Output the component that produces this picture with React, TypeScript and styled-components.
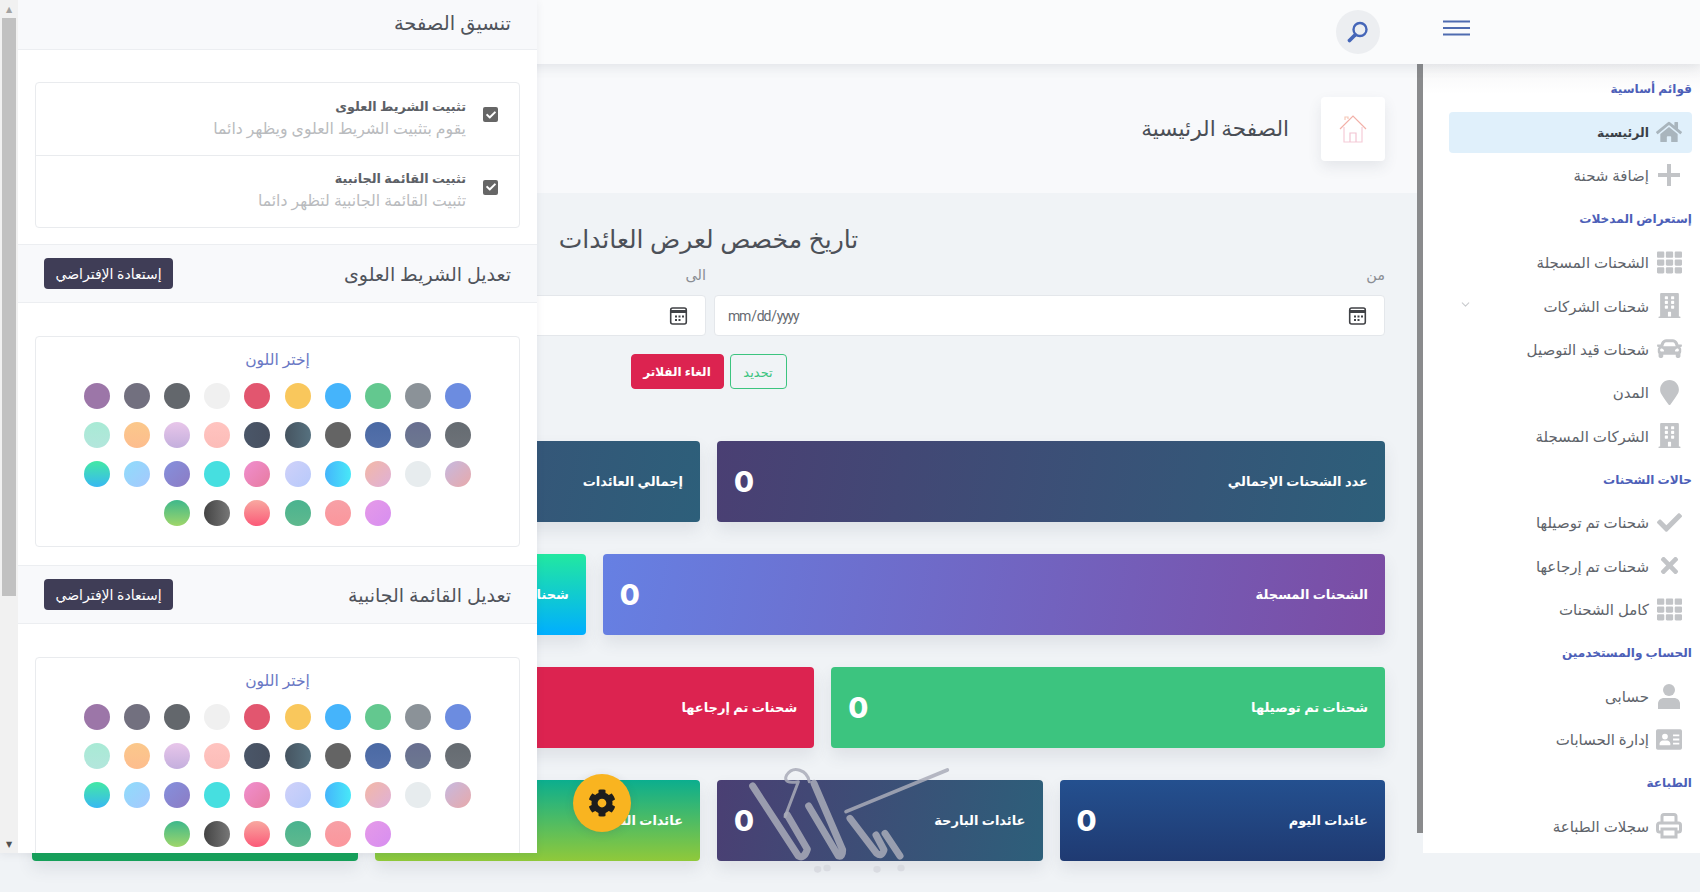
import React from 'react';
import styled, { createGlobalStyle } from 'styled-components';
import { FaCog, FaHome, FaTh, FaBuilding, FaCar, FaCheck, FaTimes, FaMapMarker } from 'react-icons/fa';
import { FiChevronDown } from 'react-icons/fi';

const FONT = `"Noto Sans", "DejaVu Sans", sans-serif`;

const CALENDAR = `url("data:image/svg+xml,%3Csvg xmlns='http://www.w3.org/2000/svg' viewBox='0 0 19 18'%3E%3Crect x='1.7' y='1' width='15.6' height='16' rx='2' fill='none' stroke='%23404246' stroke-width='1.6'/%3E%3Crect x='2' y='3' width='15' height='3' fill='%23404246'/%3E%3Cpath d='M6 8.5h2v2H6zM9.5 8.5h2v2h-2zM13 8.5h2v2h-2zM6 12h2v2H6zM9.5 12h2v2h-2z' fill='%23404246'/%3E%3C/svg%3E")`;

const GlobalStyle = createGlobalStyle`
  html, body { margin: 0; padding: 0; height: 892px; overflow: hidden; background: #f0f3f6; }
  * { box-sizing: border-box; }
  body { font-family: ${FONT}; direction: rtl; }
`;

const Page = styled.div`
  width: 1700px;
  height: 892px;
  position: relative;
  overflow: hidden;
`;

const TopBar = styled.header`
  height: 64px;
  background: #fafbfc;
  box-shadow: 0 3px 12px rgba(60, 70, 90, 0.12);
  display: flex;
  align-items: center;
  gap: 63px;
  padding: 0 230px 0 0;
  position: relative;
  z-index: 2;
`;

const MenuButton = styled.div`
  width: 27px;
  margin-top: -9px;
  display: flex;
`;

const SearchButton = styled.div`
  width: 44px;
  height: 44px;
  border-radius: 50%;
  background: #eceef1;
  display: flex;
  align-items: center;
  justify-content: center;
`;

const Body = styled.div`
  display: flex;
  height: 789px;
`;

const Sidebar = styled.aside`
  width: 277px;
  flex: none;
  background: linear-gradient(#f6f6f7 0, #fff 30px);
  padding: 3px 8px 0 0;
  display: flex;
  flex-direction: column;
`;

const SideScroll = styled.div`
  width: 6px;
  flex: none;
  height: 769px;
  background: #8a8b8d;
`;

const SectionLabel = styled.div`
  height: 43.4px;
  flex: none;
  display: flex;
  align-items: center;
  font-size: 12.1px;
  font-weight: 700;
  color: #4d5fb8;
`;

const SideItem = styled.div<{ $active?: boolean }>`
  height: 41px;
  flex: none;
  margin: 1.2px 0;
  width: 243px;
  display: flex;
  align-items: center;
  gap: 7px;
  padding-right: 10px;
  border-radius: 4px;
  position: relative;
  font-size: ${p => (p.$active ? '12.5px' : '15px')};
  font-weight: ${p => (p.$active ? 700 : 400)};
  color: ${p => (p.$active ? '#3a3f47' : '#60646b')};
  background: ${p => (p.$active ? '#e0f0fb' : 'transparent')};
`;

const SideIcon = styled.span<{ $active?: boolean }>`
  width: 26px;
  display: flex;
  justify-content: center;
  color: ${p => (p.$active ? '#a9b5bd' : '#c2c4c7')};
  font-size: ${p => (p.$active ? '28px' : '25px')};
  flex: none;
`;

const Chevron = styled.span`
  position: absolute;
  left: 10px;
  top: 13px;
  color: #c9cbce;
  font-size: 13px;
  display: flex;
`;

const Main = styled.main`
  flex: 1;
  min-width: 0;
`;

const TitleBand = styled.div`
  height: 129px;
  background: #f8f9fb;
  padding: 33px 32px 0 0;
  display: flex;
  align-items: flex-start;
  gap: 32px;
`;

const TitleIcon = styled.div`
  width: 64px;
  height: 64px;
  background: #fff;
  border-radius: 4px;
  box-shadow: 0 6px 14px rgba(60, 70, 90, 0.1);
  display: flex;
  align-items: center;
  justify-content: center;
`;

const PageTitle = styled.h1`
  margin: 16px 0 0;
  font-size: 21.6px;
  font-weight: 400;
  color: #4a4e55;
`;

const Content = styled.div`
  padding: 0 32px;
`;

const FormTitle = styled.h2`
  margin: 27px 0 0;
  height: 36px;
  line-height: 36px;
  text-align: center;
  font-size: 25px;
  font-weight: 400;
  color: #4c5058;
`;

const DateGrid = styled.div`
  display: grid;
  grid-template-columns: 671px 1fr;
  gap: 8px;
  margin-top: 8px;
`;

const DateField = styled.label`
  display: block;
  font-size: 14.5px;
  line-height: 20px;
  color: #8a8d93;
`;

const DateInput = styled.input`
  display: block;
  width: 100%;
  height: 41px;
  margin-top: 11px;
  padding: 0 17px 0 12px;
  direction: ltr;
  background: #fff;
  border: 1px solid #e4e7eb;
  border-radius: 4px;
  font-family: Roboto, sans-serif;
  font-size: 14px;
  letter-spacing: -1.2px;
  color: #666a70;
  &::-webkit-calendar-picker-indicator {
    width: 19px;
    height: 18px;
    padding: 0;
    margin: 0;
    background-image: ${CALENDAR};
    background-size: 19px 18px;
    background-repeat: no-repeat;
  }
`;

const Actions = styled.div`
  display: flex;
  justify-content: center;
  flex-direction: row-reverse;
  gap: 6px;
  margin-top: 18px;
`;

const ActionButton = styled.div<{ $variant: 'outline' | 'danger' }>`
  height: 35px;
  display: flex;
  align-items: center;
  justify-content: center;
  border-radius: 4px;
  width: ${p => (p.$variant === 'danger' ? '93px' : '57px')};
  font-size: ${p => (p.$variant === 'danger' ? '12px' : '13px')};
  font-weight: ${p => (p.$variant === 'danger' ? 700 : 400)};
  color: ${p => (p.$variant === 'danger' ? '#fff' : '#3cc47f')};
  background: ${p => (p.$variant === 'danger' ? '#dc2350' : 'transparent')};
  border: 1px solid ${p => (p.$variant === 'danger' ? '#dc2350' : '#3cc47f')};
`;

const Stats = styled.div`
  display: grid;
  grid-template-columns: repeat(12, 1fr);
  column-gap: 17px;
  row-gap: 32.5px;
  margin-top: 52px;
`;

const StatCard = styled.div<{ $span: number; $bg: string }>`
  grid-column: span ${p => p.$span};
  height: 80.5px;
  border-radius: 4px;
  background: ${p => p.$bg};
  box-shadow: 0 8px 16px rgba(60, 70, 90, 0.1);
  padding: 0 17px;
  display: flex;
  align-items: center;
  justify-content: space-between;
  color: #fff;
`;

const StatLabel = styled.span`
  font-size: 13px;
  font-weight: 700;
`;

const StatValue = styled.span`
  font-family: Inter, sans-serif;
  font-size: 29px;
  font-weight: 800;
`;

const SettingsPanel = styled.div`
  position: absolute;
  left: 0;
  top: 0;
  width: 537px;
  height: 853px;
  display: flex;
  flex-direction: row-reverse;
  z-index: 5;
  background: #fff;
  box-shadow: 0 2px 8px rgba(60, 70, 90, 0.08);
`;

const ScrollTrack = styled.div`
  width: 18px;
  flex: none;
  background: #f1f1f1;
  display: flex;
  flex-direction: column;
  align-items: center;
  height: 100%;
`;

const ScrollArrow = styled.span<{ $muted?: boolean }>`
  height: 18px;
  font-size: 8px;
  line-height: 18px;
  color: ${p => (p.$muted ? '#a3a3a3' : '#505050')};
`;

const ScrollThumb = styled.div`
  width: 14px;
  height: 578px;
  background: #c1c1c1;
`;

const ScrollSpacer = styled.div`
  flex: 1;
`;

const PanelBody = styled.div`
  flex: 1;
  min-width: 0;
  overflow: hidden;
`;

const PanelHead = styled.div<{ $tall?: boolean }>`
  height: ${p => (p.$tall ? '59px' : '50px')};
  background: #f8f9fb;
  border-top: ${p => (p.$tall ? '1px solid #eceef1' : 'none')};
  border-bottom: 1px solid #eceef1;
  padding: ${p => (p.$tall ? '0 26px' : '0 26px 4px')};
  display: flex;
  align-items: center;
  justify-content: space-between;
  font-size: ${p => (p.$tall ? '19px' : '19.5px')};
  color: #50545b;
`;

const RestoreButton = styled.div`
  width: 129px;
  height: 31px;
  background: #3f3d56;
  border-radius: 4px;
  color: #fff;
  font-size: 14px;
  display: flex;
  align-items: center;
  justify-content: center;
`;

const PanelSection = styled.div<{ $pad: number; $bottom?: number }>`
  padding: ${p => p.$pad}px 17px ${p => p.$bottom ?? 16}px 17px;
`;

const OptionCard = styled.div`
  border: 1px solid #e9ebee;
  border-radius: 4px;
  background: #fff;
`;

const OptionRow = styled.div`
  height: 72px;
  display: flex;
  align-items: center;
  gap: 17px;
  padding: 0 21px 5px 0;
  & + & { border-top: 1px solid #e9ebee; }
`;

const FakeCheck = styled.span`
  width: 15px;
  height: 15px;
  flex: none;
  margin-top: -4px;
  border-radius: 2px;
  background: #666;
  color: #fff;
  display: flex;
  align-items: center;
  justify-content: center;
  font-size: 10px;
`;

const OptionTitle = styled.div`
  font-size: 12.8px;
  font-weight: 700;
  color: #5c6066;
  line-height: 22px;
`;

const OptionDesc = styled.div`
  font-size: 15.7px;
  color: #b9bbbe;
  line-height: 22px;
`;

const SwatchCard = styled.div`
  border: 1px solid #e9ebee;
  border-radius: 4px;
  background: #fff;
  height: 211px;
  padding-top: 11px;
`;

const SwatchTitle = styled.div`
  text-align: center;
  font-size: 15.5px;
  color: #6a78c4;
  line-height: 22px;
`;

const SwatchGrid = styled.div`
  direction: ltr;
  display: flex;
  flex-wrap: wrap;
  justify-content: center;
  gap: 13px 14.2px;
  width: 396px;
  margin: 13px auto 0;
`;

const Swatch = styled.span<{ $bg: string }>`
  width: 26px;
  height: 26px;
  border-radius: 50%;
  background: ${p => p.$bg};
`;

const GearButton = styled.div`
  position: absolute;
  left: 573px;
  top: 774px;
  width: 58px;
  height: 58px;
  border-radius: 50%;
  background: #f9b420;
  color: #1d1d1d;
  font-size: 28px;
  display: flex;
  align-items: center;
  justify-content: center;
  box-shadow: 0 2px 8px rgba(60, 70, 90, 0.15);
  z-index: 4;
`;

const Watermark = styled.svg`
  position: absolute;
  left: 730px;
  top: 750px;
  z-index: 3;
  pointer-events: none;
`;

const SWATCHES = [
  '#9c76a8', '#72707f', '#63676c', '#f0f0f0', '#e2566f', '#f9c75c', '#45b4fb', '#63c88f', '#8b9298', '#6c8ce0',
  'linear-gradient(#a8ead5,#b3e6dc)', 'linear-gradient(#fbc88b,#fdbd8e)', 'linear-gradient(#e8c6ea,#c4afdd)', 'linear-gradient(#ffc4c0,#fcbcb8)', 'linear-gradient(90deg,#4a5668,#475060)', 'linear-gradient(90deg,#465460,#56717f)', '#646464', 'linear-gradient(#4a69a4,#5571aa)', 'linear-gradient(#686f90,#6d7890)', 'linear-gradient(#656b71,#6d7278)',
  'linear-gradient(#43e8a5,#38b8f2)', 'linear-gradient(135deg,#8fdcfb,#a5c8fd)', 'linear-gradient(135deg,#8590dd,#8c7cc4)', '#46dfe0', 'linear-gradient(135deg,#f08fcf,#e77ba0)', 'linear-gradient(135deg,#cfd1f9,#b7c9fb)', 'linear-gradient(90deg,#44b5fb,#48e8f8)', 'linear-gradient(135deg,#f3b8a6,#dfb0d8)', '#e7ecee', 'linear-gradient(135deg,#c6b9e0,#e8a9aa)',
  'linear-gradient(#3eb88b,#9fd66a)', 'linear-gradient(90deg,#444,#777)', 'linear-gradient(#f8a8a0,#fb5a78)', 'linear-gradient(#4ab38f,#5fb98e)', 'linear-gradient(#f7a0a6,#fb969c)', 'linear-gradient(135deg,#e59ae8,#d78ef0)',
];

const PlusIcon = () => (
  <svg width="24" height="24" viewBox="0 0 24 24" fill="currentColor">
    <path d="M10 1h4v9h9v4h-9v9h-4v-9H1v-4h9z" />
  </svg>
);

const UserIcon = () => (
  <svg width="24" height="26" viewBox="0 0 24 26" fill="currentColor">
    <circle cx="12" cy="7" r="6" />
    <path d="M1 26v-5c0-4 3-6 6-6h10c3 0 6 2 6 6v5z" />
  </svg>
);

const CardIcon = () => (
  <svg width="29" height="23" viewBox="0 0 29 23" fill="currentColor">
    <path fillRule="evenodd" d="M2 0h25a2 2 0 0 1 2 2v19a2 2 0 0 1-2 2H2a2 2 0 0 1-2-2V2a2 2 0 0 1 2-2zm8 5a3.200 3.200 0 1 0 0 6.400A3.200 3.200 0 0 0 10 5zM4 18h12v-2c0-2-2-3.500-3.500-3.500h-5C6 12.500 4 14 4 16zM19 6v2h7V6zm0 4.500v2h7v-2zm0 4.500v2h7v-2z" />
  </svg>
);

const PrintIcon = () => (
  <svg width="26" height="26" viewBox="0 0 26 26" fill="none" stroke="currentColor" strokeWidth="3">
    <path d="M6 10V3.500A2 2 0 0 1 8 1.500h10a2 2 0 0 1 2 2V10" />
    <path d="M6 19H3.500A2 2 0 0 1 1.500 17v-5a2 2 0 0 1 2-2h19a2 2 0 0 1 2 2v5a2 2 0 0 1-2 2H20" />
    <path d="M6 16h14v8H6z" />
  </svg>
);

type NavRow = { section: string } | { label: string; icon: React.ReactNode; active?: boolean; chevron?: boolean };

const NAV: NavRow[] = [
  { section: 'قوائم أساسية' },
  { label: 'الرئيسية', icon: <FaHome />, active: true },
  { label: 'إضافة شحنة', icon: <PlusIcon /> },
  { section: 'إستعراض المدخلات' },
  { label: 'الشحنات المسجلة', icon: <FaTh /> },
  { label: 'شحنات الشركات', icon: <FaBuilding />, chevron: true },
  { label: 'شحنات قيد التوصيل', icon: <FaCar /> },
  { label: 'المدن', icon: <FaMapMarker /> },
  { label: 'الشركات المسجلة', icon: <FaBuilding /> },
  { section: 'حالات الشحنات' },
  { label: 'شحنات تم توصيلها', icon: <FaCheck /> },
  { label: 'شحنات تم إرجاعها', icon: <FaTimes /> },
  { label: 'كامل الشحنات', icon: <FaTh /> },
  { section: 'الحساب والمستخدمين' },
  { label: 'حسابى', icon: <UserIcon /> },
  { label: 'إدارة الحسابات', icon: <CardIcon /> },
  { section: 'الطباعة' },
  { label: 'سجلات الطباعة', icon: <PrintIcon /> },
];

const NAVY = 'linear-gradient(100deg,#4a3f73,#2d5f7a)';

const CARDS = [
  { label: 'عدد الشحنات الإجمالي', span: 6, bg: NAVY },
  { label: 'إجمالي العائدات', span: 6, bg: NAVY },
  { label: 'الشحنات المسجلة', span: 7, bg: 'linear-gradient(100deg,#6680e3,#7b4ca3)' },
  { label: 'شحنات قيد التوصيل', span: 5, bg: 'linear-gradient(#22e8a0,#00aeff)' },
  { label: 'شحنات تم توصيلها', span: 5, bg: '#3cc47f' },
  { label: 'شحنات تم إرجاعها', span: 7, bg: '#dc2350' },
  { label: 'عائدات اليوم', span: 3, bg: 'linear-gradient(#24508f,#1f3a72)' },
  { label: 'عائدات البارحة', span: 3, bg: NAVY },
  { label: 'عائدات الشهر', span: 3, bg: 'linear-gradient(#0bae8e,#90c93a)' },
  { label: 'عائدات السنة', span: 3, bg: 'linear-gradient(#15c56a,#16a05a)' },
];

const Swatches = () => (
  <SwatchCard>
    <SwatchTitle>إختر اللون</SwatchTitle>
    <SwatchGrid>
      {SWATCHES.map((bg, i) => (
        <Swatch key={i} $bg={bg} />
      ))}
    </SwatchGrid>
  </SwatchCard>
);

const App: React.FC = () => (
  <Page>
    <GlobalStyle />
    <TopBar>
      <MenuButton>
        <svg width="27" height="16" viewBox="0 0 27 16" stroke="#4f6cb0" strokeWidth="2">
          <path d="M0 1.500h27M0 8h27M0 14.500h27" />
        </svg>
      </MenuButton>
      <SearchButton>
        <svg width="24" height="24" viewBox="0 0 24 24" fill="none" stroke="#4566b8" strokeWidth="2.4">
          <circle cx="14" cy="9.500" r="6.500" />
          <path d="M9 15 3.500 20.500" strokeWidth="3.800" strokeLinecap="round" />
        </svg>
      </SearchButton>
    </TopBar>
    <Body>
      <Sidebar>
        {NAV.map((row, i) =>
          'section' in row ? (
            <SectionLabel key={i}>{row.section}</SectionLabel>
          ) : (
            <SideItem key={i} $active={row.active}>
              <SideIcon $active={row.active}>{row.icon}</SideIcon>
              {row.label}
              {row.chevron && (
                <Chevron>
                  <FiChevronDown />
                </Chevron>
              )}
            </SideItem>
          ),
        )}
      </Sidebar>
      <SideScroll />
      <Main>
        <TitleBand>
          <TitleIcon>
            <svg width="30" height="30" viewBox="0 0 30 30" fill="none" strokeWidth="1.2">
              <path d="M2 15 15 2l13 13" stroke="#f2b0a8" />
              <path d="M7 6V3h3v2" stroke="#f6c8b8" />
              <path d="M6 13v15h18V13" stroke="#f6ccd8" />
              <path d="M12 28v-9h6v9" stroke="#f2c4d2" />
            </svg>
          </TitleIcon>
          <PageTitle>الصفحة الرئيسية</PageTitle>
        </TitleBand>
        <Content>
          <FormTitle>تاريخ مخصص لعرض العائدات</FormTitle>
          <DateGrid>
            <DateField>
              من
              <DateInput type="date" />
            </DateField>
            <DateField>
              الى
              <DateInput type="date" />
            </DateField>
          </DateGrid>
          <Actions>
            <ActionButton $variant="danger">الغاء الفلاتر</ActionButton>
            <ActionButton $variant="outline">تحديد</ActionButton>
          </Actions>
          <Stats>
            {CARDS.map(card => (
              <StatCard key={card.label} $span={card.span} $bg={card.bg}>
                <StatLabel>{card.label}</StatLabel>
                <StatValue>0</StatValue>
              </StatCard>
            ))}
          </Stats>
        </Content>
      </Main>
    </Body>
    <SettingsPanel>
      <ScrollTrack>
        <ScrollArrow $muted>▲</ScrollArrow>
        <ScrollThumb />
        <ScrollSpacer />
        <ScrollArrow>▼</ScrollArrow>
      </ScrollTrack>
      <PanelBody>
        <PanelHead>تنسيق الصفحة</PanelHead>
        <PanelSection $pad={32}>
          <OptionCard>
            <OptionRow>
              <FakeCheck>
                <FaCheck />
              </FakeCheck>
              <div>
                <OptionTitle>تثبيت الشريط العلوى</OptionTitle>
                <OptionDesc>يقوم بتثبيت الشريط العلوى ويظهر دائما</OptionDesc>
              </div>
            </OptionRow>
            <OptionRow>
              <FakeCheck>
                <FaCheck />
              </FakeCheck>
              <div>
                <OptionTitle>تثبيت القائمة الجانبية</OptionTitle>
                <OptionDesc>تثبيت القائمة الجانبية لتظهر دائما</OptionDesc>
              </div>
            </OptionRow>
          </OptionCard>
        </PanelSection>
        <PanelHead $tall>
          تعديل الشريط العلوى
          <RestoreButton>إستعادة الإفتراضي</RestoreButton>
        </PanelHead>
        <PanelSection $pad={33} $bottom={18}>
          <Swatches />
        </PanelSection>
        <PanelHead $tall>
          تعديل القائمة الجانبية
          <RestoreButton>إستعادة الإفتراضي</RestoreButton>
        </PanelHead>
        <PanelSection $pad={33}>
          <Swatches />
        </PanelSection>
      </PanelBody>
    </SettingsPanel>
    <GearButton>
      <FaCog />
    </GearButton>
    <Watermark width="240" height="135" viewBox="0 0 720 405" fill="none" stroke="#a9acb9" strokeOpacity="0.85" strokeLinecap="round" strokeLinejoin="round" strokeWidth="21">
      <path d="M68 108 205 318Q222 328 232 298L172 195" />
      <path d="M236 168 325 318Q338 322 338 300L252 100" />
      <path d="M360 205 440 310Q455 322 462 300L438 255" />
      <path d="M465 250 510 318" />
      <path d="M238 95C232 60 190 45 170 75 160 95 175 100 205 95L165 200" strokeWidth="9" />
      <path d="M652 60 348 185" strokeWidth="11" />
      <path d="M262 358h2M290 354h2M440 358h2M512 354h2" stroke="#d6d8de" strokeWidth="20" />
    </Watermark>
  </Page>
);

export default App;
